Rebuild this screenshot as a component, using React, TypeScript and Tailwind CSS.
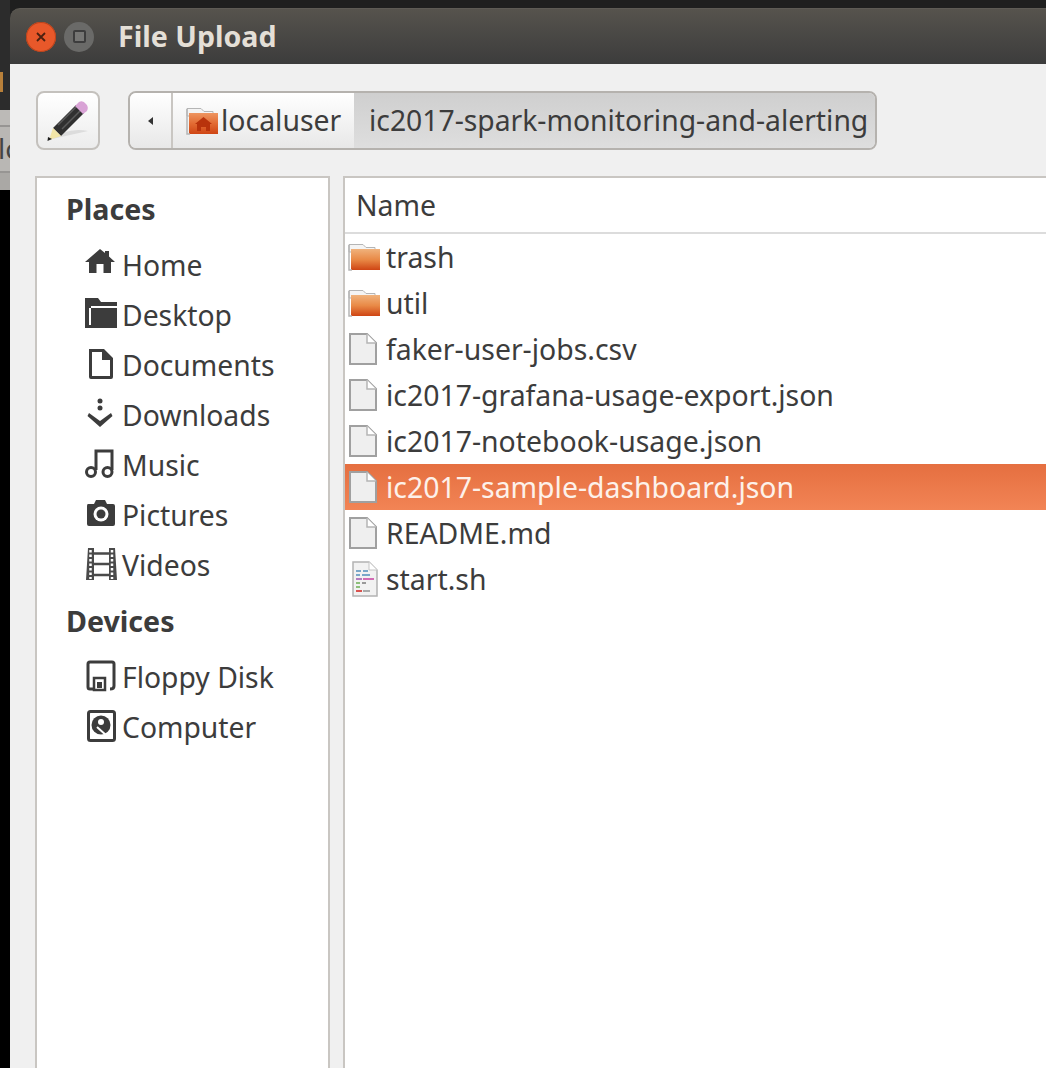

import React from "react";

const font = { fontFamily: '"Noto Sans", "Open Sans", sans-serif' };

function Pencil() {
  return (
    <svg width="48" height="46" viewBox="0 0 48 46">
      <path d="M8 41 L44 33 Q32 30 18 35 Z" fill="#dcdcdc" />
      <path d="M9 30 L32 7 L40 15 L17 38 Z" fill="#303030" />
      <path d="M14 27 L35 6 M18 31 L37 12" stroke="#5a5a5a" strokeWidth="1.500" />
      <path d="M31 8 L35 4 Q39 2 42 6 Q45 9 43 13 L39 16 Z" fill="#d9a3d6" />
      <path d="M9 30 L17 38 L5 42 Z" fill="#f3e6a8" />
      <path d="M4 39 L8 41 L3.500 43 Z" fill="#1c1c1c" />
    </svg>
  );
}

function Folder({ home = false }: { home?: boolean }) {
  const id = home ? "fh" : "fo";
  return (
    <svg width="32" height="30" viewBox="0 0 32 30">
      <defs>
        <linearGradient id={id} x1="0" y1="0" x2="0" y2="1">
          <stop offset="0" stopColor={home ? "#ee9560" : "#f0b27c"} />
          <stop offset="0.5" stopColor={home ? "#e26b33" : "#e98a47"} />
          <stop offset="1" stopColor="#cf4514" />
        </linearGradient>
      </defs>
      <path d="M1 2.500 H15 L18 5.500 H27 V10 H1 Z" fill="#f4f4f4" stroke="#b5b5b5" />
      <rect x="3" y="7" width="29" height="21" fill={`url(#${id})`} />
      <path d="M1 3 V28 H4" fill="none" stroke="#b5b5b5" strokeWidth="1.500" />
      {home && <path d="M17.500 11 L26 18 H24 V25 H20 V21 H15 V25 H11 V18 H9 Z" fill="#b8330c" />}
    </svg>
  );
}

function Doc() {
  return (
    <svg width="30" height="34" viewBox="0 0 30 34">
      <path d="M2 2 H19 L28 11 V32 H2 Z" fill="#efefef" stroke="#a0a0a0" strokeWidth="2" />
      <path d="M19 2 V11 H28" fill="#fff" stroke="#b5b5b5" strokeWidth="1.500" />
    </svg>
  );
}

function Script() {
  const bars: [number, number, number, string][] = [
    [6, 9, 5, "#7aa7c9"], [13, 9, 5, "#7aa7c9"],
    [6, 13, 4, "#7aa7c9"], [12, 13, 8, "#7aa7c9"],
    [6, 17, 6, "#b27cc0"], [13, 17, 11, "#d36bb5"],
    [6, 21, 4, "#8cbf7a"], [12, 21, 4, "#999"],
    [6, 25, 4, "#8cbf7a"],
    [6, 29, 6, "#d9534f"], [13, 29, 7, "#aaa"],
  ];
  return (
    <svg width="28" height="36" viewBox="0 0 28 36" className="ml-[3px]">
      <path d="M2 1 H18 L26 9 V35 H2 Z" fill="#f2f2f2" stroke="#b3b3b3" strokeWidth="1.500" />
      <path d="M18 1 V9 H26" fill="#fff" stroke="#c4c4c4" />
      {bars.map(([x, y, w, c], i) => (
        <rect key={i} x={x - 1} y={y} width={w} height="2" fill={c} />
      ))}
    </svg>
  );
}

const ic = "#3c3c3c";
const icons: Record<string, React.ReactNode> = {
  Home: <path d="M15 1 L20 5 V3 H24 V8.500 L30 14 H26 V25 H18.500 V16 H11.500 V25 H4 V14 H0 Z" fill={ic} />,
  Desktop: <path d="M0 0 H13 L16 4 H32 V8 H6 V10 H4 V27 H32 V30 H0 Z M6 10 H32 V28 H6 Z" fill={ic} />,
  Documents: <path fillRule="evenodd" d="M4 1 H19 L28 10 V29 Q28 31 26 31 H6 Q4 31 4 29 Z M7 4 V28 H25 V12 H17 V4 Z" fill={ic} />,
  Downloads: (
    <g fill={ic}>
      <circle cx="15" cy="3" r="2.500" />
      <circle cx="15" cy="10" r="2.500" />
      <path d="M4 15 L15 23 L26 15 L27.500 18 L15 29 L2.500 18 Z" />
    </g>
  ),
  Music: (
    <g fill="none" stroke={ic} strokeWidth="3">
      <path d="M11 22 V3 H27 V22" />
      <circle cx="6" cy="24" r="4.500" />
      <circle cx="22.500" cy="24" r="4.500" />
    </g>
  ),
  Pictures: (
    <g>
      <path fillRule="evenodd" d="M3 6 H9 L11 2 H20 L22 6 H28 Q30 6 30 8 V26 Q30 28 28 28 H4 Q2 28 2 26 V8 Q2 6 3 6 Z" fill={ic} />
      <circle cx="16" cy="16" r="7.500" fill="#fff" />
      <circle cx="16" cy="16" r="4.500" fill={ic} />
    </g>
  ),
  Videos: (
    <g>
      <path d="M3 0 H9 V32 H1 Z M24 0 H30 L32 32 H24 Z" fill="#4a4a4a" />
      <path d="M5.500 2 V31 M27 2 V31" stroke="#fff" strokeWidth="2.500" strokeDasharray="2.500 2" />
      <path d="M9 5.500 H24 M9 16 H24 M9 27 H24" stroke="#4a4a4a" strokeWidth="2.500" />
    </g>
  ),
  "Floppy Disk": (
    <g fill="none" stroke={ic} strokeWidth="3">
      <path d="M8 29 H5 Q3 29 3 27 V4 Q3 2 5 2 H27 Q29 2 29 4 V26 Q29 29 25 29" />
      <rect x="9" y="18" width="11" height="12" fill="#fff" strokeWidth="2.500" />
      <rect x="12" y="22" width="5" height="6" fill={ic} stroke="none" />
    </g>
  ),
  Computer: (
    <g>
      <rect x="3.500" y="1.500" width="26" height="29" rx="2" fill="none" stroke={ic} strokeWidth="3" />
      <circle cx="16" cy="15" r="9.500" fill={ic} />
      <circle cx="16" cy="12" r="3" fill="#fff" />
      <path d="M12 17 L22 26" stroke="#fff" strokeWidth="2" />
    </g>
  ),
};

function SideItem({ label }: { label: string }) {
  return (
    <div className="flex h-[50px] items-center pl-[48px]">
      <svg width="34" height="34" viewBox="0 0 34 34" className="shrink-0">
        {icons[label]}
      </svg>
      <span className="ml-[3px] text-[28.300px] text-[#3c3c3c]">{label}</span>
    </div>
  );
}

function Row({ name, kind, selected = false }: { name: string; kind: "folder" | "doc" | "script"; selected?: boolean }) {
  return (
    <div
      className={
        "flex h-[46px] items-center pl-[3px] text-[28.400px] " +
        (selected ? "bg-gradient-to-b from-[#e56f40] to-[#f28455] text-[#fdf1ea]" : "text-[#3c3c3c]")
      }
    >
      <span className="flex w-[38px] justify-start">
        {kind === "folder" ? <Folder /> : kind === "doc" ? <Doc /> : <Script />}
      </span>
      <span>{name}</span>
    </div>
  );
}

export default function App() {
  return (
    <div className="flex h-[1068px] w-[1046px] overflow-hidden bg-black" style={font}>
      <div className="flex w-[10px] shrink-0 flex-col">
        <div className="h-[72px] bg-[#2c2c2c]" />
        <div className="h-[20px] bg-[#2c2c2c]">
          <div className="h-full w-[3px] bg-[#b8803a]" />
        </div>
        <div className="h-[18px] bg-[#2c2c2c]" />
        <div className="h-[17px] border-b-2 border-[#979593] bg-[#bcbab7]" />
        <div className="h-[46px] overflow-hidden border-b-2 border-[#979593] bg-[#b9b7b4] pt-[7px] text-[28px] leading-none whitespace-nowrap text-[#444]">
          <span className="-ml-[2px] block">lc</span>
        </div>
        <div className="h-[17px] bg-[#aaa8a5]" />
      </div>
      <div className="flex min-w-0 flex-1 flex-col bg-[#1f1f1f] pt-[8px]">
        <div className="flex h-[56px] shrink-0 items-center rounded-tl-[10px] border-t border-[#5e5b55] bg-gradient-to-b from-[#56534d] to-[#3c3c3c] pl-[16px]">
          <div className="flex h-[30px] w-[30px] items-center justify-center rounded-full bg-[#e8582a] shadow-[inset_0_0_0_1px_#b8431c]">
            <svg width="12" height="12" viewBox="0 0 12 12">
              <path d="M2 2 L10 10 M10 2 L2 10" stroke="#4a2010" strokeWidth="1.800" />
            </svg>
          </div>
          <div className="ml-[8px] flex h-[30px] w-[30px] items-center justify-center rounded-full bg-[#6a6a68]">
            <div className="h-[13px] w-[13px] rounded-[2px] border-2 border-[#3d3d3d] bg-[#767674]" />
          </div>
          <div className="ml-[24px] text-[28.600px] font-bold text-[#e4dfd6]">File Upload</div>
        </div>
        <div className="flex min-h-0 flex-1 flex-col bg-[#f0f0f0] pl-[25px]">
          <div className="mt-[27px] flex h-[59px] shrink-0 items-stretch">
            <div className="ml-[1px] flex w-[64px] items-center justify-center rounded-[8px] border-2 border-[#c4c1bd] bg-gradient-to-b from-white to-[#ececec]">
              <Pencil />
            </div>
            <div className="ml-[29px] -translate-x-[1px] flex w-[749px] items-stretch overflow-hidden rounded-[8px] border-2 border-[#b5b2ae]">
              <div className="flex w-[43px] items-center justify-center border-r-2 border-[#c9c6c2] bg-gradient-to-b from-white to-[#e8e8e8]">
                <div className="h-0 w-0 border-y-[4px] border-r-[5px] border-y-transparent border-r-[#333]" />
              </div>
              <div className="flex w-[181px] items-center bg-gradient-to-b from-white to-[#e8e8e8] pl-[13px] text-[28.400px] whitespace-nowrap text-[#3c3c3c]">
                <Folder home />
                <span className="ml-[3px]">localuser</span>
              </div>
              <div className="flex flex-1 items-center bg-gradient-to-b from-[#cfcfcf] to-[#dedede] pl-[15px] text-[28.300px] whitespace-nowrap text-[#3c3c3c]">
                ic2017-spark-monitoring-and-alerting
              </div>
            </div>
          </div>
          <div className="mt-[26px] flex min-h-0 flex-1 items-stretch">
            <div className="w-[295px] shrink-0 border-x-2 border-t-2 border-[#c9c6c2] bg-white">
              <div className="flex h-[60px] items-center pl-[29px] pt-[3px] text-[28.600px] font-bold text-[#3c3c3c]">Places</div>
              <div className="pt-[2px]">
                {["Home", "Desktop", "Documents", "Downloads", "Music", "Pictures", "Videos"].map((l) => (
                  <SideItem key={l} label={l} />
                ))}
              </div>
              <div className="flex h-[62px] items-center pl-[29px] text-[28.600px] font-bold text-[#3c3c3c]">Devices</div>
              <div>
                {["Floppy Disk", "Computer"].map((l) => (
                  <SideItem key={l} label={l} />
                ))}
              </div>
            </div>
            <div className="ml-[13px] min-w-0 flex-1 border-t-2 border-l-2 border-[#c9c6c2] bg-white">
              <div className="flex h-[56px] items-center border-b-2 border-[#dcdcdc] pl-[11px] pt-[1px] text-[28.400px] text-[#3c3c3c]">Name</div>
              <Row name="trash" kind="folder" />
              <Row name="util" kind="folder" />
              <Row name="faker-user-jobs.csv" kind="doc" />
              <Row name="ic2017-grafana-usage-export.json" kind="doc" />
              <Row name="ic2017-notebook-usage.json" kind="doc" />
              <Row name="ic2017-sample-dashboard.json" kind="doc" selected />
              <Row name="README.md" kind="doc" />
              <Row name="start.sh" kind="script" />
            </div>
          </div>
        </div>
      </div>
    </div>
  );
}
